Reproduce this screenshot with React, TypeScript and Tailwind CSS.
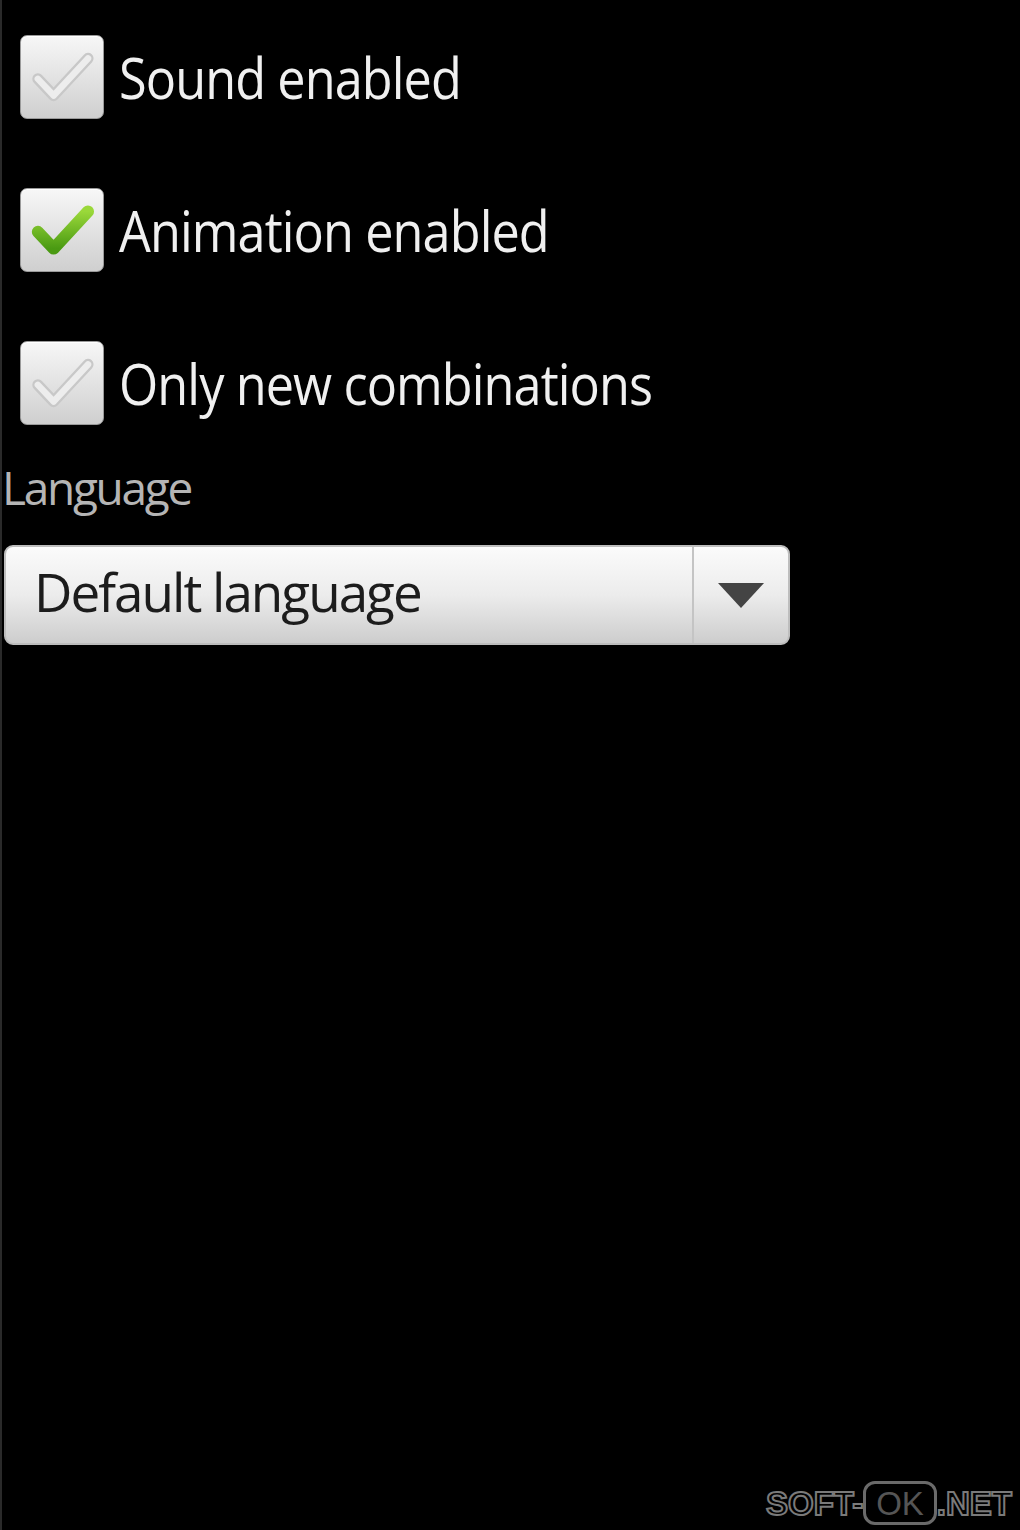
import React from "react";

const font = { fontFamily: '"Open Sans", "Noto Sans", sans-serif' };

function CheckMark({ checked }: { checked: boolean }) {
  if (checked) {
    return (
      <svg viewBox="0 0 84 84" className="w-full h-full">
        <defs>
          <linearGradient id="g" x1="0" y1="0" x2="0" y2="1">
            <stop offset="0" stopColor="#9ad83a" />
            <stop offset="1" stopColor="#4a9a12" />
          </linearGradient>
        </defs>
        <path
          d="M16 44 L33 62 L70 22"
          fill="none"
          stroke="url(#g)"
          strokeWidth="13"
          strokeLinecap="round"
          strokeLinejoin="round"
        />
      </svg>
    );
  }
  return (
    <svg viewBox="0 0 84 84" className="w-full h-full">
      <path
        d="M16 44 L33 62 L70 22"
        fill="none"
        stroke="#c8c8c8"
        strokeWidth="12"
        strokeLinecap="round"
        strokeLinejoin="round"
      />
      <path
        d="M16 44 L33 62 L70 22"
        fill="none"
        stroke="#ededed"
        strokeWidth="7"
        strokeLinecap="round"
        strokeLinejoin="round"
      />
    </svg>
  );
}

function CheckRow({ label, checked }: { label: string; checked: boolean }) {
  return (
    <div className="flex items-center h-[153px] pl-[18px]">
      <div className="w-[84px] h-[84px] rounded-[7px] border border-[#9a9a9a] bg-gradient-to-b from-[#f7f7f7] to-[#cfcfcf] p-[2px] shadow-[inset_0_1px_0_#fff]">
        <CheckMark checked={checked} />
      </div>
      <span
        className="ml-[15px] inline-block origin-left scale-x-[0.9] text-[56px] leading-none text-[#f0f0f0] tracking-[-1px] whitespace-nowrap"
        style={font}
      >
        {label}
      </span>
    </div>
  );
}

export default function App() {
  return (
    <div className="w-[1020px] h-[1530px] bg-black relative overflow-hidden border-l-2 border-[#2a2a2a]">
      <div className="flex flex-col">
        <CheckRow label="Sound enabled" checked={false} />
        <CheckRow label="Animation enabled" checked={true} />
        <CheckRow label="Only new combinations" checked={false} />
      </div>
      <div className="text-[46px] leading-none text-[#b5b5b5] mt-[5px] tracking-[-2.3px]" style={font}>
        Language
      </div>
      <div className="mt-[35px] ml-[2px] w-[786px] h-[100px] rounded-[9px] border-2 border-[#bdbdbd] bg-gradient-to-b from-[#fbfbfb] via-[#ececec] to-[#cdcdcd] flex items-stretch">
        <div className="flex-1 flex items-center pl-[28px] pb-[6px] text-[53px] text-[#1c1c1c] tracking-[-2px]" style={font}>
          Default language
        </div>
        <div className="w-[96px] border-l-2 border-[#c4c4c4] flex items-center justify-center">
          <svg width="46" height="25" viewBox="0 0 46 25">
            <polygon points="0,0 46,0 23,25" fill="#444" />
          </svg>
        </div>
      </div>
      <div className="absolute right-[8px] bottom-[2px] flex items-center text-[33px] font-bold text-black [-webkit-text-stroke:2px_#7a7a7a]" style={{ fontFamily: '"Liberation Sans", Arial, sans-serif' }}>
        <span>SOFT-</span>
        <span className="border-[3px] border-[#6a6a6a] rounded-[12px] px-[10px] h-[44px] flex items-center font-normal text-[#555] [-webkit-text-stroke:0px]">OK</span>
        <span>.NET</span>
      </div>
    </div>
  );
}
